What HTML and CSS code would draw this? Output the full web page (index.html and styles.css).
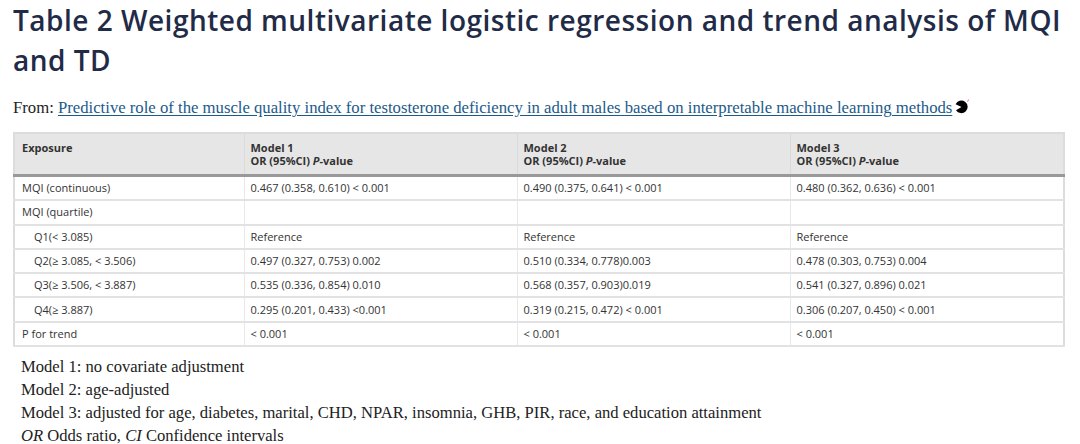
FILE: index.html
```html
<!DOCTYPE html>
<html>
<head>
<meta charset="utf-8">
<link rel="stylesheet" href="styles.css">
</head>
<body>
<div class="page">
  <h1 class="title">Table 2 Weighted multivariate logistic regression and trend analysis of MQI and TD</h1>
  <p class="from">From: <a class="src" href="#">Predictive role of the muscle quality index for testosterone deficiency in adult males based on interpretable machine learning methods</a><span class="pac"><svg width="16" height="15" viewBox="0 0 16 15"><path d="M7.5 8 L1.6 5.2 A6.3 6.3 0 1 1 2 11.2 Z" fill="#000"/><path d="M13.6 2.6 L14.6 0.6" stroke="#e06080" stroke-width="1"/></svg></span></p>
  <table class="tbl">
    <colgroup>
      <col class="w1"><col class="w2"><col class="w2"><col class="w3">
    </colgroup>
    <thead>
      <tr>
        <th>Exposure</th>
        <th>Model 1<br>OR (95%CI) <i>P</i>-value</th>
        <th>Model 2<br>OR (95%CI) <i>P</i>-value</th>
        <th>Model 3<br>OR (95%CI) <i>P</i>-value</th>
      </tr>
    </thead>
    <tbody>
      <tr><td>MQI (continuous)</td><td>0.467 (0.358, 0.610) &lt; 0.001</td><td>0.490 (0.375, 0.641) &lt; 0.001</td><td>0.480 (0.362, 0.636) &lt; 0.001</td></tr>
      <tr><td>MQI (quartile)</td><td></td><td></td><td></td></tr>
      <tr><td class="ind">Q1(&lt; 3.085)</td><td>Reference</td><td>Reference</td><td>Reference</td></tr>
      <tr><td class="ind">Q2(≥ 3.085, &lt; 3.506)</td><td>0.497 (0.327, 0.753) 0.002</td><td>0.510 (0.334, 0.778)0.003</td><td>0.478 (0.303, 0.753) 0.004</td></tr>
      <tr><td class="ind">Q3(≥ 3.506, &lt; 3.887)</td><td>0.535 (0.336, 0.854) 0.010</td><td>0.568 (0.357, 0.903)0.019</td><td>0.541 (0.327, 0.896) 0.021</td></tr>
      <tr><td class="ind">Q4(≥ 3.887)</td><td>0.295 (0.201, 0.433) &lt;0.001</td><td>0.319 (0.215, 0.472) &lt; 0.001</td><td>0.306 (0.207, 0.450) &lt; 0.001</td></tr>
      <tr><td>P for trend</td><td>&lt; 0.001</td><td>&lt; 0.001</td><td>&lt; 0.001</td></tr>
    </tbody>
  </table>
  <div class="notes">
    <p>Model 1: no covariate adjustment</p>
    <p>Model 2: age-adjusted</p>
    <p>Model 3: adjusted for age, diabetes, marital, CHD, NPAR, insomnia, GHB, PIR, race, and education attainment</p>
    <p><i>OR</i> Odds ratio, <i>CI</i> Confidence intervals</p>
  </div>
</div>
</body>
</html>
```
FILE: styles.css
```css
html, body {
  margin: 0;
  padding: 0;
  background: #fff;
}
.page {
  padding: 0 14px 0 13px;
}
.title {
  margin: 0;
  padding-top: 0;
  font-family: "Open Sans", Lato, sans-serif;
  font-weight: 600;
  font-size: 28px;
  line-height: 40px;
  color: #1f2b47;
  letter-spacing: 0.5px;
}
.from {
  margin: 17px 0 0 0;
  font-family: "Liberation Serif", "DejaVu Serif", serif;
  font-size: 16.7px;
  line-height: 22px;
  color: #222;
}
.src {
  color: #1c5a8a;
  text-decoration: underline;
  text-underline-offset: 2px;
}
.pac {
  display: inline-block;
  vertical-align: -1px;
  margin-left: 2px;
}
.tbl {
  margin-top: 12px;
  width: 1050px;
  table-layout: fixed;
  border-collapse: collapse;
  border: 2px solid #dcdcdc;
  font-family: "Open Sans", sans-serif;
  font-size: 11px;
  color: #333;
}
.w1 { width: 230px; }
.w2 { width: 273px; }
.w3 { width: 274px; }
.tbl th {
  background: #e6e6e6;
  text-align: left;
  vertical-align: top;
  font-weight: 700;
  line-height: 13px;
  padding: 7px 6px 7px 6px;
  border-bottom: 3px solid #999;
  border-left: 1px solid #dadada;
  color: #333;
}
.tbl th:first-child {
  padding-left: 7px;
}
.tbl td {
  height: 22.3px;
  padding: 0 6px;
  line-height: 14px;
  border-bottom: 2px solid #e2e2e2;
  border-left: 1px solid #e8e8e8;
}
.tbl td:first-child {
  padding-left: 7px;
}
.tbl td.ind {
  padding-left: 19px;
}
.notes {
  padding: 8px 0 0 8px;
  font-family: "Liberation Serif", "DejaVu Serif", serif;
  font-size: 16.6px;
  line-height: 23px;
  color: #222;
}
.notes p {
  margin: 0;
}
```
